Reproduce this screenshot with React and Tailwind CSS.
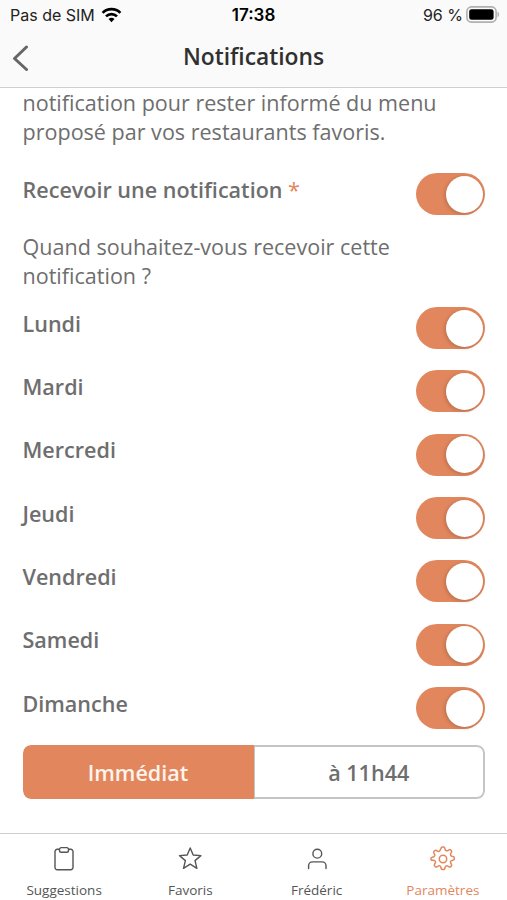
import { useState } from "react";

const DAYS = ["Lundi", "Mardi", "Mercredi", "Jeudi", "Vendredi", "Samedi", "Dimanche"];

function WifiIcon() {
  return (
    <svg width="21" height="16" viewBox="0 0 21 16" fill="none" stroke="#000" strokeWidth="2.7">
      <path d="M1.6 5.9a12.6 12.6 0 0 1 17.8 0" />
      <path d="M5 9.4a7.8 7.8 0 0 1 11 0" />
      <path d="M10.5 15.2l-3-3.1a4.3 4.3 0 0 1 6 0z" fill="#000" stroke="none" />
    </svg>
  );
}

function BatteryIcon() {
  return (
    <svg width="34" height="17" viewBox="0 0 34 17">
      <rect x="0.9" y="0.9" width="29.2" height="15.2" rx="4.5" fill="none" stroke="#b0b0b0" strokeWidth="1.6" />
      <rect x="3.2" y="3.2" width="24.4" height="10.6" rx="2.4" fill="#000" />
      <path d="M31.5 5.8c2 .6 2 4.8 0 5.4z" fill="#b0b0b0" />
    </svg>
  );
}

function ClipboardIcon() {
  return (
    <svg width="26" height="26" viewBox="0 0 26 26" fill="none" stroke="currentColor" strokeWidth="1.4">
      <path d="M8.6 3.3H6.2a2.2 2.2 0 0 0-2.2 2.2v16a2.2 2.2 0 0 0 2.2 2.2h13.6a2.2 2.2 0 0 0 2.2-2.2v-16a2.2 2.2 0 0 0-2.2-2.2h-2.4" />
      <rect x="8.5" y="1.6" width="9" height="4.6" rx="1.8" />
    </svg>
  );
}

function StarIcon() {
  return (
    <svg width="26" height="26" viewBox="0 0 26 26" fill="none" stroke="currentColor" strokeWidth="1.4" strokeLinejoin="round">
      <path d="M13.2 2l3 7 7.7.6-5.9 5 1.9 7.7-6.7-4.1-6.7 4.1 1.9-7.7-5.9-5 7.7-.6z" />
    </svg>
  );
}

function UserIcon() {
  return (
    <svg width="26" height="26" viewBox="0 0 26 26" fill="none" stroke="currentColor" strokeWidth="1.4" strokeLinecap="round">
      <circle cx="13.3" cy="7.7" r="4.4" />
      <path d="M4.6 22.6v-2.8a3.9 3.9 0 0 1 3.9-3.9h9.6a3.9 3.9 0 0 1 3.9 3.9v2.8" />
    </svg>
  );
}

function GearIcon() {
  return (
    <svg width="26" height="26" viewBox="0 0 26 26" fill="none" stroke="currentColor" strokeWidth="1.5" strokeLinejoin="round">
      <circle cx="13" cy="13" r="3.7" />
      <path d="M11.2 2.1Q11.4 1 12.4 1h1.2q1 0 1.2 1.1l.3 1.2q.2 1 1.1 1.4t1.7-.2l1.2-.7q.9-.5 1.6.2l.6.6q.7.7.2 1.6l-.7 1.2q-.6.9-.2 1.7t1.4 1.1l1.2.3q1.1.2 1.1 1.2v1.2q0 1-1.1 1.2l-1.2.3q-1 .2-1.4 1.1t.2 1.7l.7 1.2q.5.9-.2 1.6l-.6.6q-.7.7-1.6.2l-1.2-.7q-.9-.6-1.7-.2t-1.1 1.4l-.3 1.2q-.2 1.1-1.2 1.1h-1.2q-1 0-1.2-1.1l-.3-1.2q-.2-1-1.1-1.4t-1.7.2l-1.2.7q-.9.5-1.6-.2l-.6-.6q-.7-.7-.2-1.6l.7-1.2q.6-.9.2-1.7t-1.4-1.1l-1.2-.3Q1 14.6 1 13.6v-1.2q0-1 1.1-1.2l1.2-.3q1-.2 1.4-1.1t-.2-1.7l-.7-1.2q-.5-.9.2-1.6l.6-.6q.7-.7 1.6-.2l1.2.7q.9.6 1.7.2t1.1-1.4z" />
    </svg>
  );
}

function Toggle({ checked, onChange, label }) {
  return (
    <button
      role="switch"
      aria-checked={checked}
      aria-label={label}
      onClick={onChange}
      className={`flex h-[42px] w-[69px] shrink-0 items-center rounded-full px-[2px] ${
        checked ? "justify-end bg-[#e2875d]" : "justify-start bg-gray-300"
      }`}
    >
      <span className="size-[37px] rounded-full bg-white shadow-[-1px_1px_4px_rgba(0,0,0,0.2)]" />
    </button>
  );
}

const TABS = [
  { label: "Suggestions", Icon: ClipboardIcon },
  { label: "Favoris", Icon: StarIcon },
  { label: "Frédéric", Icon: UserIcon },
  { label: "Paramètres", Icon: GearIcon },
];

export default function App() {
  const [enabled, setEnabled] = useState(true);
  const [days, setDays] = useState(DAYS);
  const [immediate, setImmediate] = useState(true);
  const [tab, setTab] = useState("Paramètres");

  const toggleDay = (day) =>
    setDays((s) => (s.includes(day) ? s.filter((d) => d !== day) : [...s, day]));

  return (
    <div className="flex h-[900px] w-[507px] flex-col overflow-hidden bg-white font-['Open_Sans','Noto_Sans',sans-serif] text-[#6e6e6e]">
      {/* Header */}
      <header className="h-[88px] shrink-0 border-b border-[#cfcfcf] bg-[#fafafa]">
        <div className="grid h-[29px] grid-cols-[1fr_44px_1fr] items-center pr-[7px] pl-[10px] font-['Inter',sans-serif] text-[16px] text-[#222]">
          <div className="flex items-center gap-[6px] whitespace-nowrap">
            <span>Pas de SIM</span>
            <WifiIcon />
          </div>
          <span className="-ml-[3px] pt-[2px] text-center text-[17px] font-semibold text-black">17:38</span>
          <div className="flex items-center justify-end gap-[3px] whitespace-nowrap">
            <span>96 %</span>
            <BatteryIcon />
          </div>
        </div>
        <div className="grid h-[57px] grid-cols-[60px_1fr_60px] items-center">
          <button aria-label="Retour" className="pl-[11px]">
            <svg width="18" height="26" viewBox="0 0 18 26" fill="none" stroke="#666" strokeWidth="3" strokeLinecap="round" strokeLinejoin="round">
              <path d="M15.5 2L3.5 13.5l12 11" />
            </svg>
          </button>
          <h1 className="text-center text-[22.8px] font-semibold text-[#303030]">Notifications</h1>
        </div>
      </header>

      {/* Content */}
      <main className="flex-1 pr-[22px] pl-[22.5px] text-[21.55px] leading-[29px]">
        <p className="whitespace-nowrap">
          notification pour rester informé du menu
          <br />
          proposé par vos restaurants favoris.
        </p>

        <div className="mt-[27px] flex h-[42px] items-start justify-between">
          <span className="pt-[2px] font-semibold">
            Recevoir une notification <span className="font-normal text-[#e2875d]">*</span>
          </span>
          <Toggle checked={enabled} onChange={() => setEnabled(!enabled)} label="Recevoir une notification" />
        </div>

        <p className="mt-[17px] whitespace-nowrap">
          Quand souhaitez-vous recevoir cette
          <br />
          notification ?
        </p>

        <div className="mt-[17px]">
          {DAYS.map((day) => (
            <div key={day} className="flex h-[63.35px] items-start justify-between">
              <span className="pt-[1.5px] font-semibold">{day}</span>
              <Toggle checked={days.includes(day)} onChange={() => toggleDay(day)} label={day} />
            </div>
          ))}
        </div>

        <div className="-mt-[5px] flex h-[54px] overflow-hidden rounded-lg font-semibold">
          <button
            onClick={() => setImmediate(true)}
            className={`w-[231px] rounded-l-lg border-2 ${
              immediate ? "border-[#e2875d] bg-[#e2875d] text-[#fff3ec]" : "border-[#c4c4c4] bg-white"
            }`}
          >
            Immédiat
          </button>
          <button
            onClick={() => setImmediate(false)}
            className={`flex-1 rounded-r-lg border-2 border-l ${
              immediate ? "border-[#c4c4c4] bg-white" : "border-[#e2875d] bg-[#e2875d] text-[#fff3ec]"
            }`}
          >
            à 11h44
          </button>
        </div>
      </main>

      {/* Tab bar */}
      <nav className="grid h-[67px] shrink-0 grid-cols-4 border-t border-[#cfcfcf] px-px">
        {TABS.map(({ label, Icon }) => (
          <button
            key={label}
            onClick={() => setTab(label)}
            className={`flex flex-col items-center pt-[12px] text-[13.5px] ${
              tab === label ? "text-[#e2875d]" : "text-[#555]"
            }`}
          >
            <Icon />
            <span className="mt-[9px] leading-[18px]">{label}</span>
          </button>
        ))}
      </nav>
    </div>
  );
}
